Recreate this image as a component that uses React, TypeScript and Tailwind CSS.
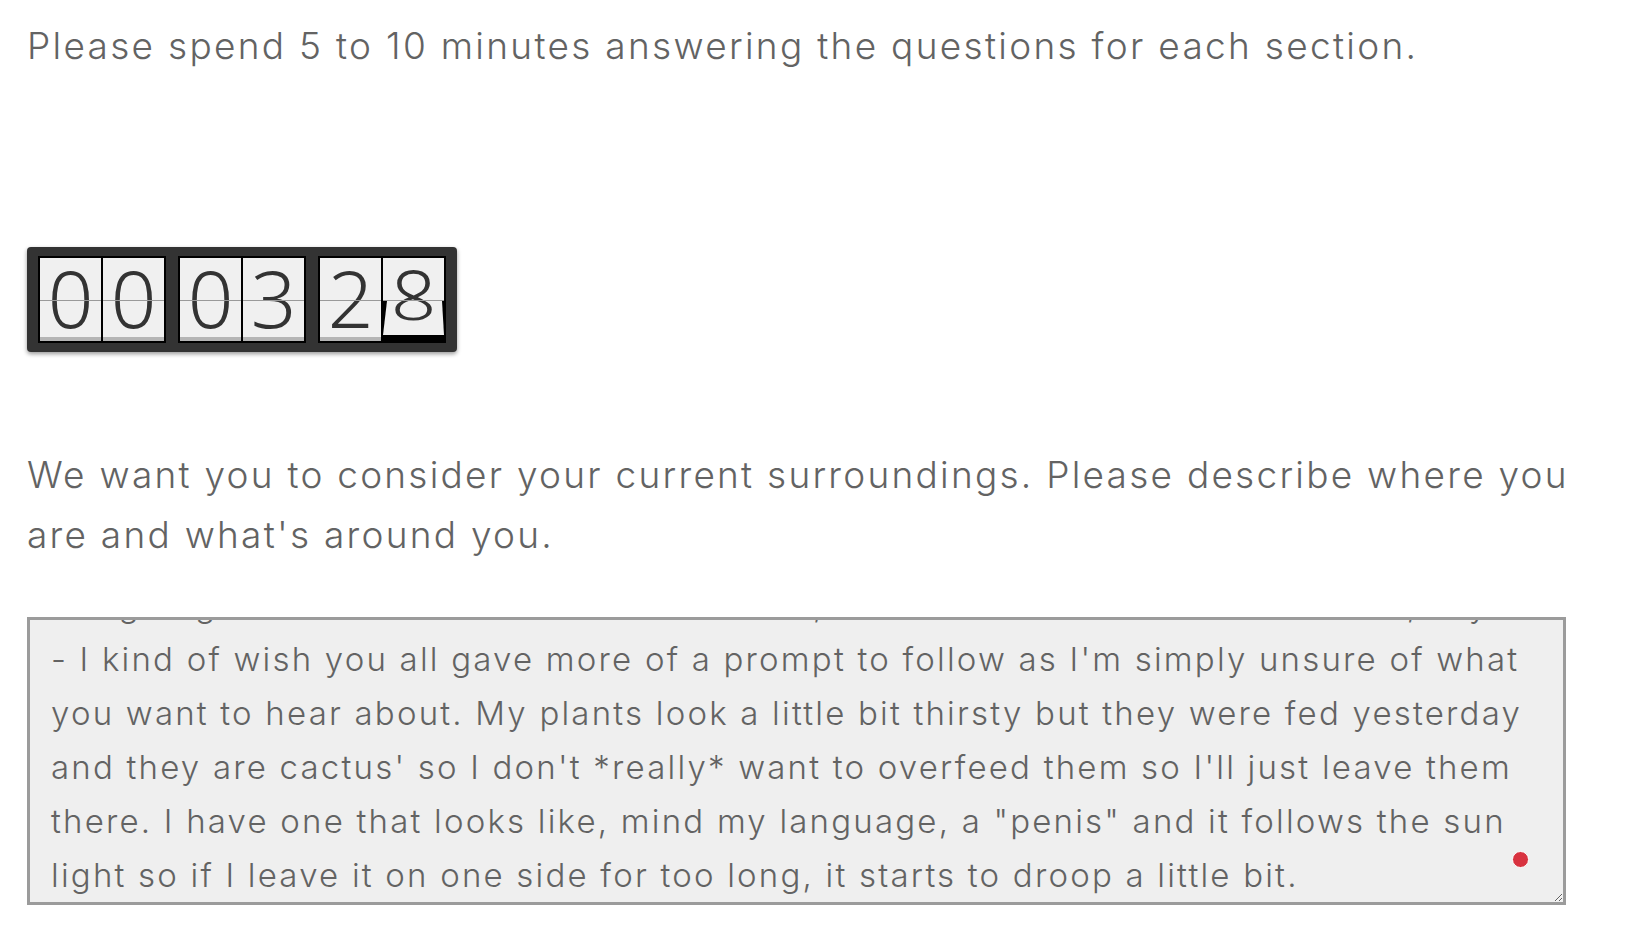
import { useEffect, useRef } from "react";

const bodyFont = "font-['Inter','Noto_Sans',sans-serif]";
const digitFont = "font-['Noto_Sans','Inter',sans-serif]";

const hiddenLine = "A big bag of old seeds sits near the window, under a shelf full of ancient stuff, say";

const answerLines = [
  hiddenLine,
  "- I kind of wish you all gave more of a prompt to follow as I'm simply unsure of what",
  "you want to hear about. My plants look a little bit thirsty but they were fed yesterday",
  "and they are cactus' so I don't *really* want to overfeed them so I'll just leave them",
  'there. I have one that looks like, mind my language, a "penis" and it follows the sun',
  "light so if I leave it on one side for too long, it starts to droop a little bit.",
];

const FlipCard = ({ digit }: { digit: string }) => {
  return (
    <div className="relative flex h-[83px] w-[61px] items-center justify-center overflow-hidden border-b-[4px] border-[#b5b5b5] bg-[#f0f0f0]">
      <span className={`${digitFont} text-[80px] font-light leading-none text-[#333] -mt-[2px]`}>
        {digit}
      </span>
      <div className="absolute left-0 right-0 top-[42px] h-px bg-[#9a9a9a]" />
    </div>
  );
};

// the last digit is caught half-way through its flip
const FlippingCard = ({ digit }: { digit: string }) => {
  return (
    <div className="flex h-[83px] w-[61px] flex-col bg-black">
      <div className="relative h-[43px] overflow-hidden bg-[#f0f0f0] border-b border-[#9a9a9a]">
        <span className={`absolute left-0 right-0 top-[3px] text-center ${digitFont} text-[80px] font-light leading-[70px] text-[#333]`}>
          {digit}
        </span>
      </div>
      <div className="relative h-[34px] overflow-hidden bg-[#f0f0f0] [clip-path:polygon(4px_0,calc(100%_-_2px)_0,100%_100%,0_100%)]">
        <span className={`absolute left-0 right-0 top-[-40px] origin-[50%_40px] scale-y-[0.72] text-center ${digitFont} text-[80px] font-light leading-[70px] text-[#333]`}>
          {digit}
        </span>
      </div>
    </div>
  );
};

const Timer = () => {
  const groups = [
    ["0", "0"],
    ["0", "3"],
    ["2", "8"],
  ];
  return (
    <div className="inline-flex gap-[12px] rounded-[4px] bg-[#333] px-[11px] py-[9px] shadow-[0_2px_4px_rgba(0,0,0,0.4)]">
      {groups.map((g, gi) => (
        <div key={gi} className="flex gap-[2px] bg-black p-[2px]">
          {g.map((d, di) =>
            gi === 2 && di === 1 ? (
              <FlippingCard key={di} digit={d} />
            ) : (
              <FlipCard key={di} digit={d} />
            )
          )}
        </div>
      ))}
    </div>
  );
};

const App = () => {
  const areaRef = useRef<HTMLTextAreaElement>(null);

  useEffect(() => {
    if (areaRef.current) areaRef.current.scrollTop = 9999;
  }, []);

  return (
    <div className={`min-h-screen bg-white pl-[27px] pt-[16px] text-[#636363] ${bodyFont}`}>
      <p className="text-[37px] font-light leading-[60px] tracking-[2.3px] whitespace-nowrap">
        Please spend 5 to 10 minutes answering the questions for each section.
      </p>

      <div className="mt-[171px]">
        <Timer />
      </div>

      <p className="mt-[93px] text-[37px] font-light leading-[60px] tracking-[2.25px] whitespace-nowrap">
        We want you to consider your current surroundings. Please describe where you
        <br />
        are and what's around you.
      </p>

      <div className="relative mt-[52px] w-[1539px]">
        <textarea
          ref={areaRef}
          readOnly
          wrap="off"
          value={answerLines.join("\n")}
          className="block h-[288px] w-full overflow-hidden border-[3px] border-[#9b9b9b] bg-[#efefef] py-0 pl-[21px] pr-[4px] text-[33px] font-light leading-[54px] tracking-[2.2px] text-[#636363] outline-none"
        />
        <span className="absolute right-[37px] top-[234px] h-[17px] w-[17px] rounded-full border-[1.5px] border-white bg-[#d8323f]" />
      </div>
    </div>
  );
};

export default App;
